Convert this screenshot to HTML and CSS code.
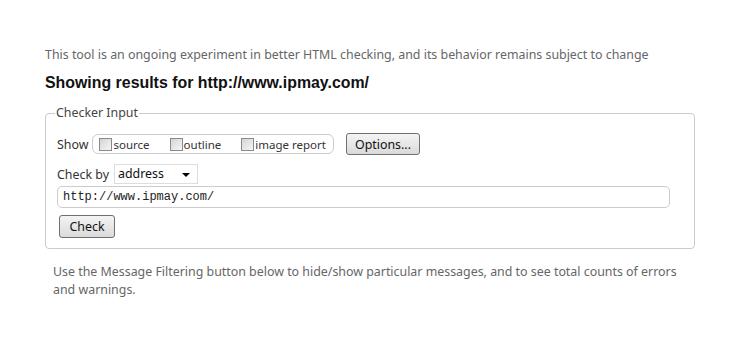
FILE: index.html
```html
<!DOCTYPE html>
<html lang="en">
<head>
    <meta charset="UTF-8">
    <title>Nu Html Checker</title>
    <link rel="stylesheet" href="styles.css">
</head>
<body>

    <div class="page">
        <p class="intro">This tool is an ongoing experiment in better HTML checking, and its behavior remains subject to change</p>
        <h2>Showing results for http://www.ipmay.com/</h2>

        <fieldset class="checker">
            <legend>Checker Input</legend>

            <div class="row">
                <span class="label">Show</span>
                <div class="show-box">
                    <label><input type="checkbox">source</label>
                    <label><input type="checkbox">outline</label>
                    <label><input type="checkbox">image report</label>
                </div>
                <button type="button" class="btn options">Options...</button>
            </div>

            <div class="row by">
                <span class="label">Check by</span>
                <div class="select">
                    <span>address</span>
                    <i class="arrow"></i>
                </div>
            </div>

            <input type="text" class="url" value="http://www.ipmay.com/">

            <button type="button" class="btn check">Check</button>
        </fieldset>

        <p class="note">Use the Message Filtering button below to hide/show particular messages, and to see total counts of errors and warnings.</p>
    </div>

</body>
</html>
```

FILE: styles.css
```css
/* Global */
body {
    margin: 0;
    padding: 0;
    background-color: #fff;
    font-family: 'Noto Sans', 'Open Sans', sans-serif;
    color: #222;
}

.page {
    padding: 46px 45px 0 45px;
    width: 650px;
}

/* Intro */
.intro {
    margin: 0;
    font-size: 12.4px;
    line-height: 18px;
    color: #666;
}

h2 {
    margin: 9px 0 0 0;
    font-family: 'Liberation Sans', Arial, sans-serif;
    font-size: 15.9px;
    line-height: 20px;
    font-weight: bold;
    color: #111;
}

/* Checker Input */
.checker {
    margin: 12px 0 0 0;
    padding: 12px 11px 10px 11px;
    border: 1px solid #ccc;
    border-radius: 4px;
}

.checker legend {
    padding: 0 1px;
    margin-left: -2px;
    font-size: 12.4px;
    line-height: 16px;
    color: #444;
}

.row {
    display: flex;
    align-items: center;
    height: 22px;
    font-size: 12.4px;
    color: #333;
}

.row.by {
    height: 20px;
    margin-top: 9px;
}

.label {
    margin-right: 4px;
}

.by .label {
    margin-right: 5px;
}

.show-box {
    display: flex;
    align-items: center;
    gap: 20px;
    box-sizing: border-box;
    height: 20px;
    padding: 0 7px 0 6px;
    border: 1px solid #ccc;
    border-radius: 6px;
    font-size: 11.5px;
}

.show-box label {
    display: flex;
    align-items: center;
}

.show-box input {
    appearance: none;
    width: 13px;
    height: 13px;
    margin: 0 1px 0 0;
    border: 1px solid #8a8a8a;
    background: linear-gradient(135deg, #d4d4d4, #f6f6f6);
}

.btn {
    box-sizing: border-box;
    font-family: 'Noto Sans', 'Open Sans', sans-serif;
    font-size: 12.4px;
    color: #111;
    background: linear-gradient(#f4f4f4, #dadada);
    border: 1px solid #707070;
    border-radius: 3px;
    padding: 0 6px;
}

.options {
    width: 74px;
    height: 22px;
    margin-left: 12px;
}

.select {
    position: relative;
    box-sizing: border-box;
    width: 84px;
    height: 20px;
    padding: 0 0 0 3px;
    border: 1px solid #ddd;
    font-size: 12.4px;
    color: #111;
    line-height: 18px;
}

.arrow {
    position: absolute;
    right: 7px;
    top: 8px;
    border-left: 4px solid transparent;
    border-right: 4px solid transparent;
    border-top: 4px solid #000;
}

.url {
    display: block;
    box-sizing: border-box;
    width: 613px;
    height: 22px;
    margin: 2px 0 0 0;
    padding: 0 5px;
    border: 1px solid #ccc;
    border-radius: 5px;
    font-family: 'Liberation Mono', monospace;
    font-size: 12px;
    color: #222;
}

.check {
    width: 56px;
    height: 23px;
    margin: 7px 0 0 2px;
}

/* Note */
.note {
    max-width: 634px;
    margin: 14px 0 0 8px;
    font-size: 12.4px;
    line-height: 18px;
    color: #666;
}
```
